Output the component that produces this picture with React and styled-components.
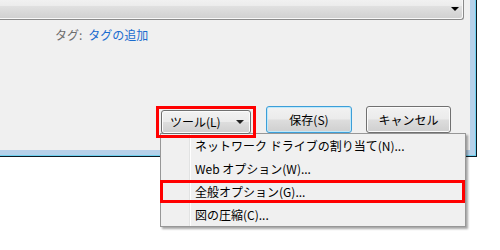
import React from 'react'
import styled, { createGlobalStyle } from 'styled-components'

const Global = createGlobalStyle`
  html, body {
    margin: 0;
    padding: 0;
    background: #ffffff;
    width: 500px;
    height: 250px;
    overflow: hidden;
  }
  body {
    font-family: "Noto Sans CJK JP", "Noto Sans", sans-serif;
    font-size: 12px;
    color: #000;
  }
`

const Page = styled.div`
  position: relative;
  width: 500px;
  height: 250px;
`

const WindowFrame = styled.div`
  width: 477px;
  height: 157px;
  box-sizing: border-box;
  background: #b6d1ea;
  border-right: 1px solid #0d1b24;
  border-bottom: 1px solid #0d1b24;
  box-shadow: inset -1px -1px 0 #6fd1f0;
  padding: 0 6px 6px 0;
`

const Dialog = styled.div`
  height: 100%;
  background: #f0f0f0;
  display: flex;
  flex-direction: column;
`

const Combo = styled.div`
  width: 464px;
  height: 20px;
  box-sizing: border-box;
  border-right: 1px solid #8a8a8a;
  border-bottom: 1px solid #8a8a8a;
  border-bottom-right-radius: 3px;
  background: linear-gradient(#f1f1f1 0%, #ececec 30%, #e0e0e0 34%, #cfcfcf 100%);
  box-shadow: inset -1px -1px 0 #f8f8f8;
  display: flex;
  justify-content: flex-end;
  align-items: center;
  padding-right: 4px;
`

const ComboArrow = styled.span`
  width: 0;
  height: 0;
  border-left: 4px solid transparent;
  border-right: 4px solid transparent;
  border-top: 4px solid #000;
  margin-top: -1px;
`

const TagRow = styled.div`
  display: flex;
  gap: 6px;
  padding-left: 55px;
  margin-top: 7px;
  line-height: 16px;
`

const TagLabel = styled.span`
  color: #6d6d6d;
`

const TagLink = styled.span`
  color: #1a6ccf;
`

const ButtonRow = styled.div`
  display: flex;
  align-items: flex-start;
  margin-top: 63px;
  padding-left: 156px;
`

const Highlight = styled.div`
  position: relative;
  z-index: 2;
  border: 3px solid #ff0000;
  padding: 1px 2px 1px 2px;
`

const Button = styled.div`
  box-sizing: border-box;
  width: ${p => p.$w}px;
  height: ${p => p.$h || 27}px;
  margin-left: ${p => p.$ml || 0}px;
  border: 1px solid ${p => (p.$focused ? '#3c9ed8' : '#707070')};
  border-radius: 3px;
  background: linear-gradient(#f2f2f2 0%, #ebebeb 48%, #dddddd 52%, #cfcfcf 100%);
  box-shadow: inset 0 0 0 1px ${p => (p.$focused ? '#bfe9fb' : '#fbfbfb')};
  display: flex;
  align-items: center;
  justify-content: ${p => (p.$split ? 'space-between' : 'center')};
  padding: 0 ${p => (p.$split ? '6px 0 8px' : '0')};
  line-height: 16px;
  white-space: nowrap;
`

const SmallArrow = styled.span`
  width: 0;
  height: 0;
  border-left: 4px solid transparent;
  border-right: 4px solid transparent;
  border-top: 4px solid #222;
`

const Menu = styled.div`
  position: absolute;
  z-index: 1;
  left: 160px;
  top: 133px;
  width: 306px;
  box-sizing: border-box;
  background: #f0f0f0;
  border: 1px solid #979797;
  box-shadow: 2px 2px 2px rgba(0, 0, 0, 0.35);
  display: flex;
  flex-direction: column;

  &::before {
    content: '';
    position: absolute;
    left: 28px;
    top: 0;
    bottom: 0;
    width: 1px;
    background: #e2e3e3;
    box-shadow: 1px 0 0 #ffffff;
  }
`

const MenuItem = styled.div`
  position: relative;
  height: 23px;
  line-height: 23px;
  padding-left: 34px;
  white-space: nowrap;

  ${p =>
    p.$marked &&
    `
    &::after {
      content: '';
      position: absolute;
      left: -1px;
      right: 0;
      top: 0;
      bottom: 0;
      border: 3px solid #ff0000;
    }
  `}
`

const items = [
  'ネットワーク ドライブの割り当て(N)...',
  'Web オプション(W)...',
  '全般オプション(G)...',
  '図の圧縮(C)...',
]

export default function App() {
  return (
    <Page>
      <Global />
      <WindowFrame>
        <Dialog>
          <Combo>
            <ComboArrow />
          </Combo>
          <TagRow>
            <TagLabel>タグ:</TagLabel>
            <TagLink>タグの追加</TagLink>
          </TagRow>
          <ButtonRow>
            <Highlight>
              <Button $w={90} $h={24} $split>
                <span>ツール(L)</span>
                <SmallArrow />
              </Button>
            </Highlight>
            <Button $w={86} $ml={10} $focused>保存(S)</Button>
            <Button $w={85} $ml={14}>キャンセル</Button>
          </ButtonRow>
        </Dialog>
      </WindowFrame>
      <Menu>
        {items.map((t, i) => (
          <MenuItem key={t} $marked={i === 2}>{t}</MenuItem>
        ))}
      </Menu>
    </Page>
  )
}
